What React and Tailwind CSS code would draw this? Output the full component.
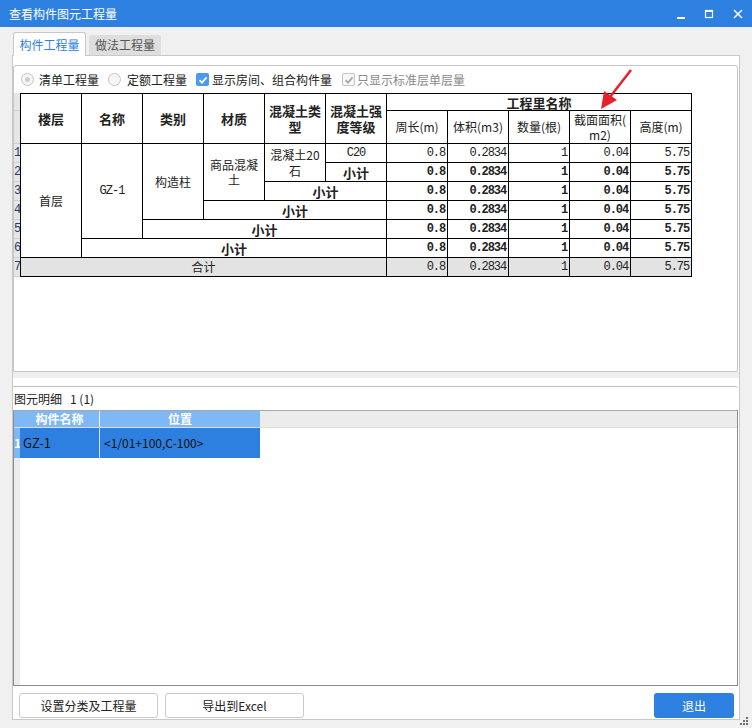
import React from 'react';

const ui = { fontFamily: '"Noto Sans CJK SC", "Microsoft YaHei", sans-serif' };
const mono = { fontFamily: '"Liberation Mono", "Noto Sans CJK SC", monospace' };

const nums = ['0.8', '0.2834', '1', '0.04', '5.75'];

function NumCells({ bold, gray }) {
  return nums.map((n, i) => (
    <td
      key={i}
      style={mono}
      className={`border border-black p-0 pr-[2px] text-right text-[12px] tracking-[-1.1px] leading-none ${bold ? 'font-bold' : ''} ${gray ? 'bg-[#e3e3e3]' : ''}`}
    >
      {n}
    </td>
  ));
}

function Sub({ span }) {
  return (
    <td colSpan={span} className="border border-black p-0 text-center text-[13px] font-bold leading-none">
      小计
    </td>
  );
}

function Radio({ on }) {
  return (
    <span className="w-[13px] h-[13px] rounded-full border border-[#c4c4c4] bg-[#f6f6f6] flex items-center justify-center">
      {on && <span className="w-[5px] h-[5px] rounded-full bg-[#cfcfcf]" />}
    </span>
  );
}

function Check({ disabled }) {
  return (
    <span
      className={`w-[13px] h-[13px] rounded-[2px] flex items-center justify-center ${
        disabled ? 'border border-[#c4c4c4] bg-[#f7f7f7]' : 'bg-[#4a9af0]'
      }`}
    >
      <svg width="10" height="10" viewBox="0 0 10 10">
        <path d="M1.5 5.2 L4 7.6 L8.6 2.4" fill="none" stroke={disabled ? '#a8a8a8' : '#fff'} strokeWidth="1.8" />
      </svg>
    </span>
  );
}

export default function App() {
  const rowH = [19, 19, 19, 19, 19, 19, 19];

  return (
    <div style={ui} className="relative w-[752px] h-[728px] bg-[#f0f0f0] flex flex-col overflow-hidden text-[#222]">
      {/* title bar */}
      <div className="h-[27px] bg-[#2e80e0] flex items-center pl-[9px] text-white text-[12px]">
        <span>查看构件图元工程量</span>
        <div className="ml-auto flex items-center h-full">
          <svg width="12" height="12" viewBox="0 0 12 12" className="mr-[16px]">
            <rect x="2" y="9" width="8" height="2" fill="#fff" />
          </svg>
          <svg width="12" height="12" viewBox="0 0 12 12" className="mr-[17px]">
            <rect x="2.5" y="2.5" width="7" height="7" fill="none" stroke="#fff" strokeWidth="1.2" />
            <rect x="2" y="2" width="8" height="2" fill="#fff" />
          </svg>
          <svg width="12" height="12" viewBox="0 0 12 12" className="mr-[8px]">
            <path d="M2 2 L10 10 M10 2 L2 10" stroke="#fff" strokeWidth="1.5" />
          </svg>
        </div>
      </div>

      {/* tabs */}
      <div className="h-[28px] pt-[5px] pl-[13px] flex items-end text-[12px]">
        <div className="h-[24px] w-[73px] -mb-px relative z-10 bg-white border border-b-0 border-[#c8c8c8] rounded-t-[3px] flex items-center justify-center text-[#2e80e0]">
          构件工程量
        </div>
        <div className="h-[20px] w-[72px] ml-[3px] bg-[#dedede] rounded-t-[2px] flex items-center justify-center text-[#555]">
          做法工程量
        </div>
      </div>

      {/* tab panel */}
      <div className="ml-[12px] w-[728px] h-[665px] bg-white border border-[#c8c8c8] flex flex-col">
        <div className="h-[9px]" />

        {/* top panel */}
        <div className="h-[307px] mr-[1px] border border-[#c6c6c6] rounded-t-[3px] flex flex-col">
          <div className="h-[27px] flex items-center text-[12px]">
            <span className="ml-[7px]"><Radio on /></span>
            <span className="ml-[5px]">清单工程量</span>
            <span className="ml-[9px]"><Radio /></span>
            <span className="ml-[6px]">定额工程量</span>
            <span className="ml-[9px]"><Check /></span>
            <span className="ml-[3px]">显示房间、组合构件量</span>
            <span className="ml-[10px]"><Check disabled /></span>
            <span className="ml-[2px] text-[#8a8a8a]">只显示标准层单层量</span>
          </div>

          <div className="flex">
            {/* row number strip */}
            <div className="w-[6px] bg-[#e6e6e6] flex flex-col text-[12px] leading-none overflow-hidden" style={mono}>
              <div className="h-[18px] border-b border-[#cfcfcf]" />
              <div className="h-[33px] border-b border-[#cfcfcf]" />
              {rowH.map((h, i) => (
                <div key={i} className="h-[19px] border-b border-[#cfcfcf] flex items-center text-[#2a3a6a]">
                  {i + 1}
                </div>
              ))}
            </div>

            <table className="border-collapse table-fixed w-[672px] text-[12px]">
              <colgroup>
                {Array.from({ length: 11 }).map((_, i) => (
                  <col key={i} className="w-[61px]" />
                ))}
              </colgroup>
              <thead>
                <tr className="h-[17px]">
                  {['楼层', '名称', '类别', '材质'].map((t) => (
                    <th key={t} rowSpan={2} className="border border-black p-0 text-[13px] font-bold">
                      {t}
                    </th>
                  ))}
                  <th rowSpan={2} className="border border-black p-0 text-[13px] font-bold leading-[16px]">
                    混凝土类<br />型
                  </th>
                  <th rowSpan={2} className="border border-black p-0 text-[13px] font-bold leading-[16px]">
                    混凝土强<br />度等级
                  </th>
                  <th colSpan={5} className="border border-black p-0 text-[13px] font-bold leading-none">
                    工程里名称
                  </th>
                </tr>
                <tr className="h-[33px]">
                  {['周长(m)', '体积(m3)', '数量(根)'].map((t) => (
                    <th key={t} className="border border-black p-0 font-normal text-[12px]">
                      {t}
                    </th>
                  ))}
                  <th className="border border-black p-0 font-normal text-[12px] leading-[15px]">
                    截面面积(<br />m2)
                  </th>
                  <th className="border border-black p-0 font-normal text-[12px]">高度(m)</th>
                </tr>
              </thead>
              <tbody>
                <tr className="h-[19px]">
                  <td rowSpan={6} className="border border-black p-0 text-center text-[12px]">首层</td>
                  <td rowSpan={5} style={mono} className="border border-black p-0 text-center text-[12px] tracking-[-1px]">GZ-1</td>
                  <td rowSpan={4} className="border border-black p-0 text-center text-[12px]">构造柱</td>
                  <td rowSpan={3} className="border border-black p-0 text-center text-[12px] leading-[15px]">
                    商品混凝<br />土
                  </td>
                  <td rowSpan={2} className="border border-black p-0 text-center text-[12px] leading-[16px]">
                    混凝土20<br />石
                  </td>
                  <td style={mono} className="border border-black p-0 text-center text-[12px] tracking-[-1px] leading-none">C20</td>
                  <NumCells />
                </tr>
                <tr className="h-[19px]">
                  <Sub span={1} />
                  <NumCells bold />
                </tr>
                <tr className="h-[19px]">
                  <Sub span={2} />
                  <NumCells bold />
                </tr>
                <tr className="h-[19px]">
                  <Sub span={3} />
                  <NumCells bold />
                </tr>
                <tr className="h-[19px]">
                  <Sub span={4} />
                  <NumCells bold />
                </tr>
                <tr className="h-[19px]">
                  <Sub span={5} />
                  <NumCells bold />
                </tr>
                <tr className="h-[19px]">
                  <td colSpan={6} className="border border-black p-0 text-center text-[12px] leading-none bg-[#e3e3e3]">
                    合计
                  </td>
                  <NumCells gray />
                </tr>
              </tbody>
            </table>
          </div>
        </div>

        {/* splitter */}
        <div className="h-[6px] bg-[#efefef]" />
        <div className="h-[8px]" />

        {/* lower panel */}
        <div className="h-[300px] mr-[1px] border-t border-[#bdbdbd] rounded-tr-[3px] flex flex-col">
          <div className="h-[23px] flex items-center text-[12px] pl-[1px]">
            <span>图元明细</span>
            <span className="ml-[8px]">1 (1)</span>
          </div>
          <div className="flex-1 border border-[#8c8c8c] border-t-[#a8a8a8] flex flex-col">
            <div className="h-[17px] bg-[#ececec] border-b border-[#dcdcdc] flex text-[12px] font-bold text-white leading-none">
              <div className="w-[6px] bg-[#7eb8f5]" />
              <div className="w-[80px] bg-[#7eb8f5] border-r border-[#e8f2fd] flex items-center justify-center">构件名称</div>
              <div className="w-[160px] bg-[#7eb8f5] flex items-center justify-center">位置</div>
            </div>
            <div className="h-[30px] flex text-[13px]">
              <div className="w-[6px] bg-[#7eb8f5] text-white font-bold text-[12px] flex items-center overflow-hidden">1</div>
              <div className="w-[80px] bg-[#2e80e0] border-r border-[#cfe2f9] flex items-center pl-[3px] text-[#111]">GZ-1</div>
              <div className="w-[160px] bg-[#2e80e0] flex items-center pl-[4px] text-[#111] text-[12px]">&lt;1/01+100,C-100&gt;</div>
            </div>
            <div className="flex-1 flex">
              <div className="w-[6px] bg-[#ececec]" />
            </div>
          </div>
        </div>

        {/* buttons */}
        <div className="flex-1 flex items-start pt-[7px] pl-[6px] text-[12px]">
          <button className="w-[139px] h-[25px] bg-white border border-[#cacaca] rounded-[3px]">设置分类及工程量</button>
          <button className="w-[139px] h-[25px] ml-[7px] bg-white border border-[#cacaca] rounded-[3px]">导出到Excel</button>
          <button className="w-[80px] h-[25px] ml-auto mr-[5px] bg-[#2e80e0] text-white rounded-[3px]">退出</button>
        </div>
      </div>

      {/* resize grip */}
      <svg width="10" height="10" viewBox="0 0 10 10" className="absolute right-[3px] bottom-[2px]">
        <rect x="7" y="1" width="2" height="2" fill="#707070" />
        <rect x="4" y="4" width="2" height="2" fill="#707070" />
        <rect x="7" y="4" width="2" height="2" fill="#707070" />
        <rect x="1" y="7" width="2" height="2" fill="#707070" />
        <rect x="4" y="7" width="2" height="2" fill="#707070" />
        <rect x="7" y="7" width="2" height="2" fill="#707070" />
      </svg>

      {/* red annotation arrow */}
      <svg width="752" height="728" className="absolute inset-0 pointer-events-none">
        <line x1="631" y1="70" x2="610" y2="97" stroke="#e8202a" strokeWidth="2.5" />
        <polygon points="601,109 604,91 617,100" fill="#e8202a" />
      </svg>
    </div>
  );
}
